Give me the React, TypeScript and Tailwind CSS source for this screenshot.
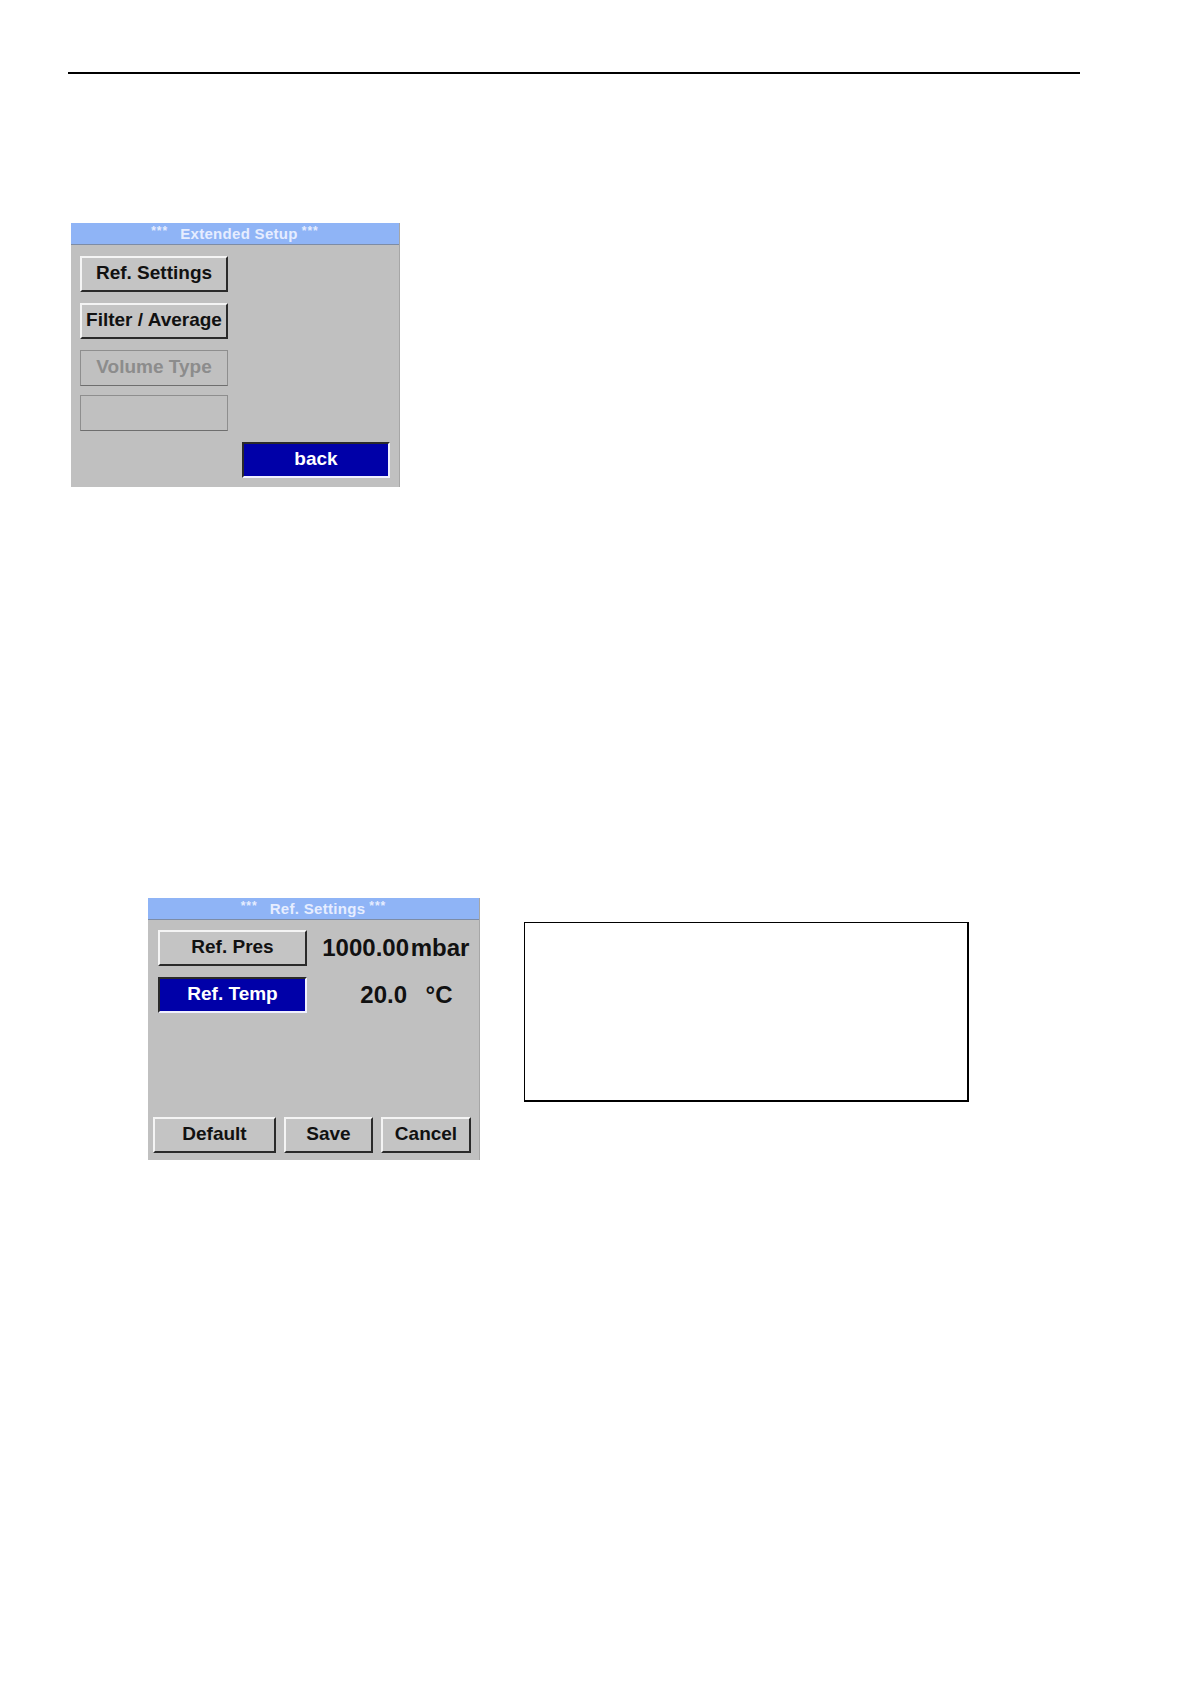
import React from "react";

const font = { fontFamily: '"Liberation Sans", Arial, sans-serif' };

function Header({ title }: { title: string }) {
  return (
    <div className="h-[22px] bg-[#8fb4f6] border-b border-[#7d8ca6] flex items-center justify-center text-[#e6edff] font-bold">
      <span className="text-[12px] leading-none mb-[5px] mr-[12px] tracking-[1px]">***</span>
      <span className="text-[15px] leading-none tracking-[0.3px]">{title}</span>
      <span className="text-[12px] leading-none mb-[5px] ml-[4px] tracking-[1px]">***</span>
    </div>
  );
}

function Btn({ label, w }: { label: string; w: string }) {
  return (
    <div
      className={`${w} h-[36px] flex items-center justify-center bg-[#c4c4c4] border-t-2 border-l-2 border-t-[#f4f4f4] border-l-[#f4f4f4] border-b-2 border-r-2 border-b-[#2a2a2a] border-r-[#2a2a2a] text-[19px] font-bold text-[#111] whitespace-nowrap overflow-hidden`}
    >
      {label}
    </div>
  );
}

function ActiveBtn({ label, w }: { label: string; w: string }) {
  return (
    <div
      className={`${w} h-[36px] flex items-center justify-center bg-[#0000a8] border-t-2 border-l-2 border-t-[#2a2a2a] border-l-[#2a2a2a] border-b-2 border-r-2 border-b-[#f0f0ff] border-r-[#f0f0ff] text-[19px] font-bold text-white whitespace-nowrap`}
    >
      {label}
    </div>
  );
}

function DisabledBtn({ label }: { label?: string }) {
  return (
    <div className="w-[148px] h-[36px] flex items-center justify-center border border-[#8e8e8e] border-b-[#6e6e6e] text-[19px] font-bold text-[#8c8c8c] whitespace-nowrap">
      {label}
    </div>
  );
}

export default function App() {
  return (
    <div className="w-[1191px] h-[1684px] bg-white pt-[72px]" style={font}>
      <div className="ml-[68px] w-[1012px] h-[1.5px] bg-black" />

      {/* Extended Setup panel */}
      <div className="mt-[149px] ml-[71px] w-[329px] h-[264px] bg-[#c0c0c0] border-r border-[#a6a6a6]">
        <Header title="Extended Setup" />
        <div className="pl-[9px] pt-[11px] flex flex-col">
          <Btn label="Ref. Settings" w="w-[148px]" />
          <div className="mt-[11px]">
            <Btn label="Filter / Average" w="w-[148px]" />
          </div>
          <div className="mt-[11px]">
            <DisabledBtn label="Volume Type" />
          </div>
          <div className="mt-[9px]">
            <DisabledBtn />
          </div>
          <div className="mt-[11px] ml-[162px]">
            <ActiveBtn label="back" w="w-[148px]" />
          </div>
        </div>
      </div>

      {/* Ref Settings row */}
      <div className="mt-[411px] ml-[148px] flex items-start">
        <div className="w-[332px] h-[262px] bg-[#c0c0c0] border-r border-[#a6a6a6] flex flex-col">
          <Header title="Ref. Settings" />
          <div className="pl-[10px] pt-[10px] flex flex-col gap-[11px]">
            <div className="flex items-center">
              <Btn label="Ref. Pres" w="w-[149px]" />
              <div className="w-[102px] text-right text-[24px] font-bold text-[#111] leading-none">1000.00</div>
              <div className="w-[62px] text-center text-[24px] font-bold text-[#111] leading-none">mbar</div>
            </div>
            <div className="flex items-center">
              <ActiveBtn label="Ref. Temp" w="w-[149px]" />
              <div className="w-[100px] text-right text-[24px] font-bold text-[#111] leading-none">20.0</div>
              <div className="w-[64px] text-center text-[24px] font-bold text-[#111] leading-none">°C</div>
            </div>
          </div>
          <div className="mt-auto pb-[7px] pl-[5px] flex gap-[8px]">
            <Btn label="Default" w="w-[123px]" />
            <Btn label="Save" w="w-[89px]" />
            <Btn label="Cancel" w="w-[90px]" />
          </div>
        </div>

        <div className="mt-[24px] ml-[44px] w-[445px] h-[180px] border-t-[1.5px] border-l-[1.5px] border-r-[2.5px] border-b-[2.5px] border-black" />
      </div>
    </div>
  );
}
